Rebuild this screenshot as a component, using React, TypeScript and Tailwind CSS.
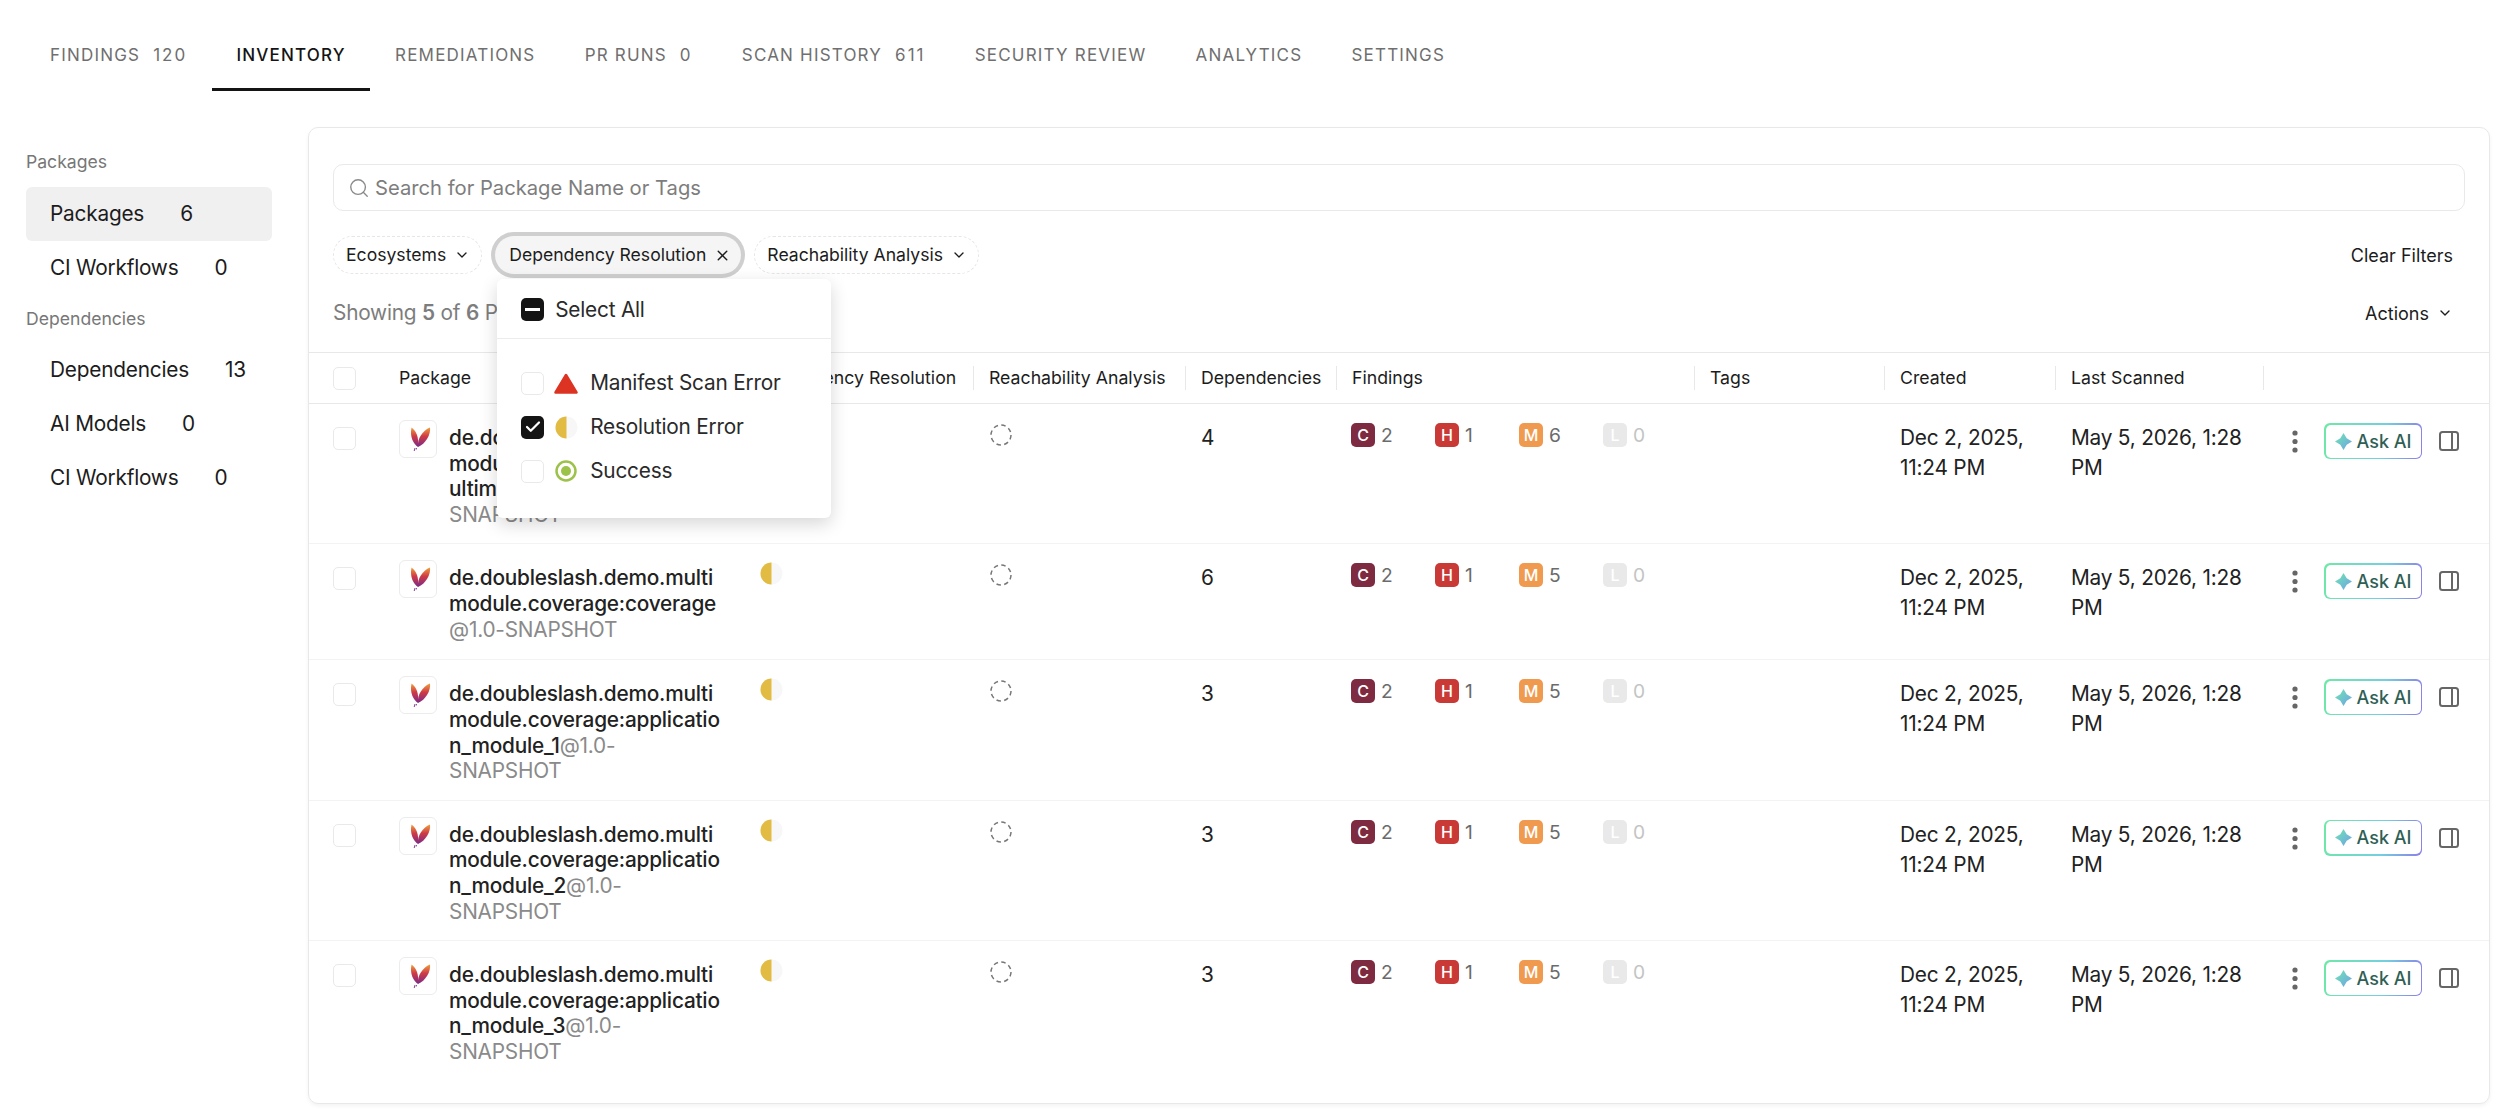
import { ChevronDown, Search, X, Check } from "lucide-react";

const tabs = [
  { label: "FINDINGS", count: "120" },
  { label: "INVENTORY", active: true },
  { label: "REMEDIATIONS" },
  { label: "PR RUNS", count: "0" },
  { label: "SCAN HISTORY", count: "611" },
  { label: "SECURITY REVIEW" },
  { label: "ANALYTICS" },
  { label: "SETTINGS" },
];

const GRID =
  "grid grid-cols-[74px_359px_231px_212px_151px_358px_190px_171px_208px_1fr]";

const rows = [
  { name: "de.doubleslash.demo.multimodule.coverage:\nultimate_module", deps: "4", medium: "6" },
  { name: "de.doubleslash.demo.multimodule.coverage:coverage", deps: "6", medium: "5", short: true },
  { name: "de.doubleslash.demo.multimodule.coverage:application_module_1", deps: "3", medium: "5" },
  { name: "de.doubleslash.demo.multimodule.coverage:application_module_2", deps: "3", medium: "5" },
  { name: "de.doubleslash.demo.multimodule.coverage:application_module_3", deps: "3", medium: "5" },
];

function Box({ className = "" }: { className?: string }) {
  return (
    <div
      className={`h-[23px] w-[23px] shrink-0 rounded-[5px] border border-[#e9e9e9] bg-white ${className}`}
    />
  );
}

function HalfCircle() {
  return (
    <svg width="23" height="23" viewBox="0 0 23 23" className="shrink-0">
      <circle cx="11.5" cy="11.5" r="11" fill="#f7f7f7" />
      <path d="M11.5 .5a11 11 0 0 0 0 22z" fill="#e2bb42" />
    </svg>
  );
}

function DashedCircle() {
  return (
    <svg width="22" height="22" viewBox="0 0 22 22">
      <circle
        cx="11"
        cy="11"
        r="10"
        fill="none"
        stroke="#777"
        strokeWidth="1.5"
        strokeDasharray="4.5 3.35"
      />
    </svg>
  );
}

function MavenLogo() {
  return (
    <div className="h-[38px] w-[38px] shrink-0 rounded-[6px] border border-[#ececec] bg-white">
      <svg width="36" height="36" viewBox="0 0 36 36">
        <defs>
          <linearGradient id="mvn" x1="0" y1="0" x2="0" y2="1">
            <stop offset="0" stopColor="#f0a13c" />
            <stop offset="0.45" stopColor="#cf3b45" />
            <stop offset="1" stopColor="#7a2a8a" />
          </linearGradient>
        </defs>
        <path d="M11.500 6.500c5 3.500 7.500 10 6.500 19.500-4.500-3-8.500-10-6.500-19.500z" fill="url(#mvn)" />
        <path d="M30 6.500c1 7-4.500 16.500-12 19.500-1-8 4.500-16.500 12-19.500z" fill="url(#mvn)" />
        <path d="M15 27l-.8 3M16.500 27l-.3 1.500" stroke="#7a2a8a" strokeWidth="0.9" fill="none" />
      </svg>
    </div>
  );
}

function Severity({ letter, value, className, faded }: { letter: string; value: string; className: string; faded?: boolean }) {
  return (
    <div className="flex w-[84px] items-start gap-[6px]">
      <div
        className={`flex h-[24px] w-[24px] items-center justify-center rounded-[5px] text-[16px] font-medium text-white ${className}`}
      >
        {letter}
      </div>
      <span className={`text-[19.2px] leading-[24px] ${faded ? "text-[#c4c4c4]" : "text-[#6b6b6b]"}`}>{value}</span>
    </div>
  );
}

function Row({ row, last }: { row: (typeof rows)[number]; last?: boolean }) {
  return (
    <div className={`${GRID} ${row.short ? "min-h-[116px]" : ""} ${last ? "" : "border-b border-[#f3f3f3]"}`}>
      <div className="pt-[23px] pl-[24px]">
        <Box />
      </div>
      <div className="flex gap-[12px] pt-[16px] pl-[16px] pb-[16px]">
        <MavenLogo />
        <div className="w-[277px] pt-[5px] text-[20.8px] leading-[25.6px] tracking-[-0.01em] text-[#8a8a8a]">
          <span className="font-medium whitespace-pre-line break-all text-[#222]">{row.name}</span>
          @1.0-SNAPSHOT
        </div>
      </div>
      <div className="pt-[18px] pl-[18px]">
        <HalfCircle />
      </div>
      <div className="pt-[20px] pl-[17px]">
        <DashedCircle />
      </div>
      <div className="pt-[19px] pl-[16px] text-[20.8px] leading-[30px] text-[#222]">{row.deps}</div>
      <div className="flex pt-[19px] pl-[15px]">
        <Severity letter="C" value="2" className="bg-[#7e2a40]" />
        <Severity letter="H" value="1" className="bg-[#c93a36]" />
        <Severity letter="M" value={row.medium} className="bg-[#f09a50]" />
        <Severity letter="L" value="0" className="bg-[#e9e9e9]" faded />
      </div>
      <div />
      <div className="pt-[19px] pl-[16px] text-[20.8px] leading-[30px] tracking-[-0.01em] text-[#222]">Dec 2, 2025, 11:24 PM</div>
      <div className="pt-[19px] pl-[16px] text-[20.8px] leading-[30px] tracking-[-0.01em] text-[#222]">May 5, 2026, 1:28 PM</div>
      <div className="flex items-start pt-[19px] pl-[22px]">
        <svg width="20" height="36" viewBox="0 0 20 36" className="shrink-0">
          <circle cx="10" cy="10" r="2.600" fill="#666" />
          <circle cx="10" cy="18.500" r="2.600" fill="#666" />
          <circle cx="10" cy="27" r="2.600" fill="#666" />
        </svg>
        <div className="ml-[19px] h-[36px] w-[98px] shrink-0 rounded-[6px] bg-[linear-gradient(100deg,#6fe8a6,#74cfe0_60%,#8d7de8)] p-[1.500px]">
          <div className="flex h-full w-full items-center justify-center gap-[5px] rounded-[5px] bg-white text-[18px] font-medium text-[#2f5f55]">
            <svg width="17" height="17" viewBox="0 0 16 16">
              <defs>
                <linearGradient id="star" x1="0" y1="0" x2="1" y2="1">
                  <stop offset="0" stopColor="#6fe8b0" />
                  <stop offset="1" stopColor="#6f9fe8" />
                </linearGradient>
              </defs>
              <path d="M8 0l3 5 5 3-5 3-3 5-3-5-5-3 5-3z" fill="url(#star)" />
            </svg>
            Ask AI
          </div>
        </div>
        <svg width="22" height="22" viewBox="0 0 22 22" fill="none" stroke="#666" strokeWidth="2" className="mt-[7px] ml-[16px] shrink-0">
          <rect x="2" y="2" width="18" height="18" rx="2.500" />
          <path d="M14 2v18" />
        </svg>
      </div>
    </div>
  );
}

function SideItem({ label, count, active }: { label: string; count: string; active?: boolean }) {
  return (
    <div
      className={`flex h-[54px] items-center gap-[36px] rounded-[6px] pl-[24px] text-[20.8px] tracking-[-0.01em] text-[#1c1c1c] ${active ? "bg-[#f0f0f0]" : ""}`}
    >
      <span>{label}</span>
      <span>{count}</span>
    </div>
  );
}

function Chip({ label }: { label: string }) {
  return (
    <div className="flex h-[38px] items-center gap-[8px] rounded-full border border-dashed border-[#e6e6e6] pr-[11px] pl-[12px] text-[17.6px] text-[#1c1c1c]">
      {label}
      <ChevronDown size={16} strokeWidth={2} />
    </div>
  );
}

function MenuRow({ label, checked, icon }: { label: string; checked?: boolean; icon: React.ReactNode }) {
  return (
    <div className="flex h-[44px] items-center text-[20.8px] tracking-[-0.01em] text-[#2a2a2a]">
      {checked ? (
        <div className="flex h-[23px] w-[23px] shrink-0 items-center justify-center rounded-[5px] bg-[#141414]">
          <Check size={18} strokeWidth={3} className="text-white" />
        </div>
      ) : (
        <Box />
      )}
      <div className="ml-[10px] flex w-[24px] shrink-0 justify-center">{icon}</div>
      <span className="ml-[12px]">{label}</span>
    </div>
  );
}

export default function App() {
  return (
    <div className="h-[1118px] w-[2508px] overflow-hidden bg-white font-['Inter',sans-serif]">
      <div className="flex h-[91px] pl-[25.4px]">
        {tabs.map((t) => (
          <div
            key={t.label}
            className={`flex h-[91px] items-center gap-[13px] border-b-[3px] px-[24.6px] pt-[23px] text-[17px] tracking-[0.07em] ${
              t.active ? "border-[#141414] font-medium text-[#141414]" : "border-transparent text-[#6f6f6f]"
            }`}
          >
            <span>{t.label}</span>
            {t.count && <span className="tracking-[0.12em]">{t.count}</span>}
          </div>
        ))}
      </div>

      <div className="flex">
        <div className="w-[308px] shrink-0 pt-[59px] pr-[36px] pl-[26px]">
          <div className="mb-[13px] h-[24px] text-[17.6px] leading-[24px] text-[#777]">Packages</div>
          <SideItem label="Packages" count="6" active />
          <SideItem label="CI Workflows" count="0" />
          <div className="mt-[12px] mb-[12px] h-[24px] text-[17.6px] leading-[24px] text-[#777]">Dependencies</div>
          <SideItem label="Dependencies" count="13" />
          <SideItem label="AI Models" count="0" />
          <SideItem label="CI Workflows" count="0" />
        </div>

        <div className="mt-[36px] flex h-[977px] w-[2182px] shrink-0 flex-col rounded-[10px] border border-[#e8e8e8] pt-[36px] shadow-[0_2px_4px_rgba(0,0,0,0.05)]">
          <div className="mx-[24px] flex h-[47px] items-center rounded-[10px] border border-[#e9e9e9] pt-[1px] pl-[14px] text-[20.2px] text-[#7d7d7d]">
            <Search size={22} strokeWidth={1.5} className="text-[#8a8a8a]" />
            <span className="ml-[5px] pt-[1px]">Search for Package Name or Tags</span>
          </div>

          <div className="mx-[24px] mt-[25px] flex h-[38px] items-center gap-[13px]">
            <Chip label="Ecosystems" />
            <div className="relative">
              <div className="flex h-[38px] items-center gap-[8px] rounded-full bg-[#f5f5f5] pr-[10px] pl-[14px] text-[17.6px] text-[#1c1c1c] ring-[4px] ring-[#cfcfcf]">
                Dependency Resolution
                <X size={17} strokeWidth={2} />
              </div>
              <div className="absolute top-[43px] left-[2px] z-10 h-[239px] w-[334px] rounded-[6px] bg-white shadow-[0_6px_18px_rgba(0,0,0,0.16)]">
                <div className="flex h-[60px] items-center border-b border-[#ececec] pt-[2px] pl-[24px] text-[20.8px] tracking-[-0.01em] text-[#2a2a2a]">
                  <div className="flex h-[23px] w-[23px] items-center justify-center rounded-[5px] bg-[#141414]">
                    <div className="h-[2.500px] w-[15px] bg-white" />
                  </div>
                  <span className="ml-[11px]">Select All</span>
                </div>
                <div className="pt-[22px] pl-[24px]">
                  <MenuRow
                    label="Manifest Scan Error"
                    icon={
                      <svg width="24" height="21" viewBox="0 0 24 21">
                        <path
                          d="M12 2L22.500 19.500H1.500z"
                          fill="#dc3323"
                          stroke="#dc3323"
                          strokeWidth="2.500"
                          strokeLinejoin="round"
                        />
                      </svg>
                    }
                  />
                  <MenuRow label="Resolution Error" checked icon={<HalfCircle />} />
                  <MenuRow
                    label="Success"
                    icon={
                      <svg width="22" height="22" viewBox="0 0 22 22">
                        <circle cx="11" cy="11" r="9.500" fill="none" stroke="#9dc24a" strokeWidth="2.500" />
                        <circle cx="11" cy="11" r="5" fill="#9dc24a" />
                      </svg>
                    }
                  />
                </div>
              </div>
            </div>
            <Chip label="Reachability Analysis" />
            <div className="ml-auto pr-[12px] text-[18px] text-[#1c1c1c]">Clear Filters</div>
          </div>

          <div className="mx-[24px] mt-[18px] flex h-[40px] items-center justify-between">
            <div className="pt-[2px] text-[20.8px] tracking-[-0.01em] text-[#7d7d7d]">
              Showing <span className="font-semibold">5</span> of <span className="font-semibold">6</span> Packages
            </div>
            <div className="flex items-center gap-[8px] pt-[2px] pr-[12px] text-[18px] text-[#1c1c1c]">
              Actions
              <ChevronDown size={16} strokeWidth={2} />
            </div>
          </div>

          <div className={`${GRID} mt-[20px] h-[52px] items-center border-y border-[#e8e8e8] text-[17.7px] text-[#1c1c1c]`}>
            <div className="pl-[24px]">
              <Box />
            </div>
            <div className="pl-[16px]">Package</div>
            {["Dependency Resolution", "Reachability Analysis", "Dependencies", "Findings", "Tags", "Created", "Last Scanned", ""].map((h) => (
              <div key={h} className="flex h-[24px] items-center border-l border-[#e8e8e8] pl-[15px]">
                {h}
              </div>
            ))}
          </div>

          {rows.map((r, i) => (
            <Row key={r.name} row={r} last={i === rows.length - 1} />
          ))}
        </div>
      </div>
    </div>
  );
}
